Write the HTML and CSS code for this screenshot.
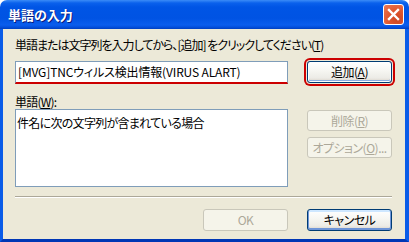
FILE: index.html
```html
<!DOCTYPE html>
<html lang="ja">
<head>
<meta charset="utf-8">
<title>単語の入力</title>
<link rel="stylesheet" href="styles.css">
</head>
<body>
<div class="window">
  <div class="titlebar">
    <span class="title">単語の入力</span>
    <span class="close">
      <svg width="21" height="21" viewBox="0 0 21 21"><path d="M6 6 L15 15 M15 6 L6 15" stroke="#fff" stroke-width="2.4" stroke-linecap="square"/></svg>
    </span>
  </div>
  <div class="body">
    <div class="label label1">単語または文字列を入力してから、[追加] をクリックしてください(<u>T</u>)</div>
    <div class="row1">
      <div class="input">[MVG]TNCウィルス検出情報(VIRUS ALART)</div>
      <div class="side">
        <div class="btn btn-focus">追加(<u>A</u>)</div>
      </div>
    </div>
    <div class="label label2">単語(<u>W</u>):</div>
    <div class="row2">
      <div class="textarea">件名に次の文字列が含まれている場合</div>
      <div class="side side-stack">
        <div class="btn disabled">削除(<u>R</u>)</div>
        <div class="btn disabled">オプション(<u>O</u>)...</div>
      </div>
    </div>
    <div class="sep"></div>
    <div class="footer">
      <div class="btn disabled">OK</div>
      <div class="btn btn-default">キャンセル</div>
    </div>
  </div>
</div>
</body>
</html>
```
FILE: styles.css
```css
html, body {
  margin: 0;
  padding: 0;
  background: #ffffff;
}
body {
  font-family: "Noto Sans CJK JP", "Noto Sans", sans-serif;
  font-size: 12px;
  font-feature-settings: "palt" 1;
  color: #000;
}
.window {
  width: 409px;
  height: 242px;
  display: flex;
  flex-direction: column;
}
.titlebar {
  height: 29px;
  box-sizing: border-box;
  border-radius: 7px 7px 0 0;
  background: linear-gradient(to bottom, #3b8cf7 0px, #0a61ec 3px, #0055e5 7px, #0053e3 18px, #0a5ded 25px, #0450de 27px, #003fc0 29px);
  display: flex;
  align-items: center;
  padding: 0 5px 0 8px;
}
.title {
  flex: 1;
  color: #fff;
  font-weight: bold;
  font-size: 13px;
  line-height: 16px;
  text-shadow: 1px 1px 0 #0a1a7a;
}
.close {
  width: 21px;
  height: 21px;
  box-sizing: border-box;
  border: 1px solid #fff;
  border-radius: 3px;
  background: radial-gradient(circle at 70% 75%, #cc4622 0%, #e0562e 45%, #ee7a55 100%);
  display: block;
}
.close svg { display: block; margin: -1px; }
.body {
  flex: 1;
  background: #ece9d8;
  border-left: 3px solid #0a5ce8;
  border-right: 4px solid #0a5ce8;
  border-bottom: 3px solid #0037b5;
  padding: 9px 13px 0 12px;
  display: flex;
  flex-direction: column;
}
.label {
  line-height: 14px;
  height: 14px;
  white-space: nowrap;
}
.label1 {
  letter-spacing: -1px;
}
.label2 {
  margin-top: 11px;
  letter-spacing: -0.8px;
}
.row1 {
  margin-top: 9px;
  display: flex;
  gap: 19px;
  align-items: flex-start;
}
.input {
  width: 273px;
  height: 23px;
  box-sizing: border-box;
  background: #fff;
  border: 1px solid #7f9db9;
  border-bottom: 2px solid #cc0000;
  padding: 0 2px;
  line-height: 20px;
  letter-spacing: -0.15px;
  white-space: nowrap;
  overflow: hidden;
}
.side {
  width: 85px;
  display: flex;
  flex-direction: column;
}
.side-stack {
  gap: 6px;
  padding-top: 1px;
}
.row2 {
  display: flex;
  gap: 19px;
  align-items: flex-start;
}
.textarea {
  width: 273px;
  height: 78px;
  box-sizing: border-box;
  background: #fff;
  border: 1px solid #7f9db9;
  padding: 6px 1px;
  line-height: 14px;
  letter-spacing: -0.7px;
}
.btn {
  width: 85px;
  height: 22px;
  box-sizing: border-box;
  border: 1px solid #003c74;
  border-radius: 3px;
  background: linear-gradient(to bottom, #ffffff 0%, #f7f7f3 40%, #ecebe6 80%, #d6d0c5 100%);
  display: flex;
  align-items: center;
  justify-content: center;
  line-height: 14px;
  letter-spacing: -0.5px;
  white-space: nowrap;
}
.side-stack .btn { height: 21px; }
.btn-focus {
  box-shadow: inset 0 0 0 1px #fff, inset 0 -1px 0 1px #89ade4, 0 0 0 1px #ece9d8, 0 0 0 3px #cc0000;
}
.btn-default {
  box-shadow: inset 0 -1px 0 1px #6e95d8, inset 0 1px 0 1px #cee7ff;
}
.disabled {
  border-color: #c9c7ba;
  background: #f5f4ea;
  color: #aca899;
}
.sep {
  margin-top: 9px;
  border-top: 1px solid #aca899;
  border-bottom: 1px solid #fff;
  height: 0;
}
.footer {
  margin-top: 11px;
  display: flex;
  justify-content: flex-end;
  gap: 19px;
}
u {
  text-decoration: underline;
  text-underline-offset: 1px;
}
```
